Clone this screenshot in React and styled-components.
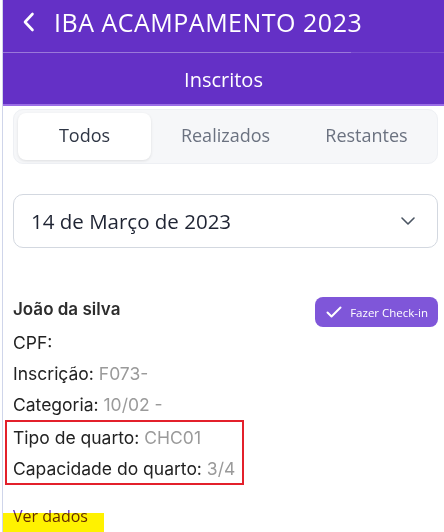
import React from "react";
import styled, { createGlobalStyle } from "styled-components";

const Global = createGlobalStyle`
  html, body { margin: 0; padding: 0; background: #ffffff; }
  body { font-family: "Open Sans", sans-serif; }
  * { box-sizing: border-box; }
`;

const Page = styled.div`
  margin-left: 2px;
  border-left: 1px solid #cfd5ea;
  min-height: 532px;
  position: relative;
  overflow: hidden;
`;

const Header = styled.header`
  background: #6430c6;
  border-bottom: 2px solid #9b6ee6;
  color: #ffffff;
  font-family: "Open Sans", sans-serif;
`;

const TitleRow = styled.div`
  height: 52px;
  display: flex;
  align-items: center;
  gap: 19px;
  padding: 0 0 8px 19px;
`;

const Title = styled.h1`
  margin: 0;
  font-size: 25px;
  font-weight: 500;
  letter-spacing: 0.5px;
`;

const Divider = styled.div`
  height: 1px;
  background: linear-gradient(to right, rgba(255,255,255,0.35) 0, rgba(255,255,255,0.35) 79%, rgba(255,255,255,0.15) 79%);
`;

const SubTitle = styled.div`
  height: 51px;
  display: flex;
  align-items: center;
  justify-content: center;
  font-size: 20px;
  font-weight: 400;
  padding-top: 2px;
`;

const Content = styled.main`
  padding: 3px 6px 0 10px;
`;

const Tabs = styled.div`
  display: grid;
  grid-template-columns: repeat(3, 1fr);
  gap: 8px;
  background: #f6f7f9;
  border: 1px solid #eef0f4;
  border-radius: 10px;
  padding: 3px 4px;
  height: 55px;
`;

const Tab = styled.div`
  display: flex;
  align-items: center;
  justify-content: center;
  border-radius: 8px;
  font-size: 18px;
  font-family: "Open Sans", sans-serif;
  padding-bottom: 3px;
  color: ${p => (p.$active ? "#2f3645" : "#6b7280")};
  background: ${p => (p.$active ? "#ffffff" : "transparent")};
  box-shadow: ${p => (p.$active ? "0 1px 3px rgba(0,0,0,0.1)" : "none")};
`;

const Select = styled.div`
  margin-top: 30px;
  height: 54px;
  border: 1px solid #d3d8e0;
  border-radius: 10px;
  display: flex;
  align-items: center;
  justify-content: space-between;
  padding: 0 22px 0 17px;
  font-family: "Open Sans", sans-serif;
  font-size: 20.5px;
  color: #1f2433;
`;

const Card = styled.section`
  margin-top: 44px;
`;

const NameRow = styled.div`
  display: flex;
  justify-content: space-between;
  align-items: flex-start;
`;

const Name = styled.div`
  font-family: Inter, sans-serif;
  font-weight: 600;
  font-size: 17px;
  color: #2d2d2d;
  margin-top: 7px;
`;

const CheckButton = styled.button`
  display: flex;
  align-items: center;
  gap: 8px;
  height: 30px;
  padding: 0 10px 0 11px;
  border: none;
  border-radius: 8px;
  background: #7f56d9;
  color: #ffffff;
  font-family: "Open Sans", sans-serif;
  font-size: 11.5px;
  margin-top: 5px;
`;

const Line = styled.div`
  font-family: Inter, sans-serif;
  font-size: 17.5px;
  color: #222222;
  height: 31px;
  line-height: 31px;
`;

const Value = styled.span`
  color: #9a9a9a;
`;

const Marked = styled.div`
  border: 2px solid #e3202b;
  width: 239px;
  margin-left: -8px;
  padding: 0 0 0 6px;
  height: 65px;
  display: flex;
  flex-direction: column;
  justify-content: center;
`;

const MoreLink = styled.div`
  margin-top: 21px;
  font-family: "Open Sans", sans-serif;
  font-size: 16px;
  line-height: 20px;
  color: #6530c8;
`;

const Highlight = styled.div`
  position: absolute;
  left: 0;
  top: 513px;
  width: 101px;
  height: 19px;
  background: #fff200;
  mix-blend-mode: multiply;
  pointer-events: none;
`;

export default function App() {
  return (
    <>
      <Global />
      <Page>
        <Header>
          <TitleRow>
            <svg width="13" height="20" viewBox="0 0 13 20" fill="none">
              <path d="M10.5 2 L3 10 L10.5 18" stroke="#fff" strokeWidth="2.6" strokeLinecap="round" strokeLinejoin="round" />
            </svg>
            <Title>IBA ACAMPAMENTO 2023</Title>
          </TitleRow>
          <Divider />
          <SubTitle>Inscritos</SubTitle>
        </Header>
        <Content>
          <Tabs>
            <Tab $active>Todos</Tab>
            <Tab>Realizados</Tab>
            <Tab>Restantes</Tab>
          </Tabs>
          <Select>
            <span>14 de Março de 2023</span>
            <svg width="14" height="8" viewBox="0 0 14 8" fill="none">
              <path d="M1 1 L7 7 L13 1" stroke="#4b5563" strokeWidth="1.6" strokeLinecap="round" strokeLinejoin="round" />
            </svg>
          </Select>
          <Card>
            <NameRow>
              <Name>João da silva</Name>
              <CheckButton>
                <svg width="16" height="12" viewBox="0 0 16 12" fill="none">
                  <path d="M1.5 6.5 L5.5 10.5 L14.5 1.5" stroke="#fff" strokeWidth="2" strokeLinecap="round" strokeLinejoin="round" />
                </svg>
                Fazer Check-in
              </CheckButton>
            </NameRow>
            <Line>CPF:</Line>
            <Line>Inscrição: <Value>F073-</Value></Line>
            <Line>Categoria: <Value>10/02 -</Value></Line>
            <Marked>
              <Line>Tipo de quarto: <Value>CHC01</Value></Line>
              <Line>Capacidade do quarto: <Value>3/4</Value></Line>
            </Marked>
            <MoreLink>Ver dados</MoreLink>
          </Card>
          <Highlight />
        </Content>
      </Page>
    </>
  );
}
